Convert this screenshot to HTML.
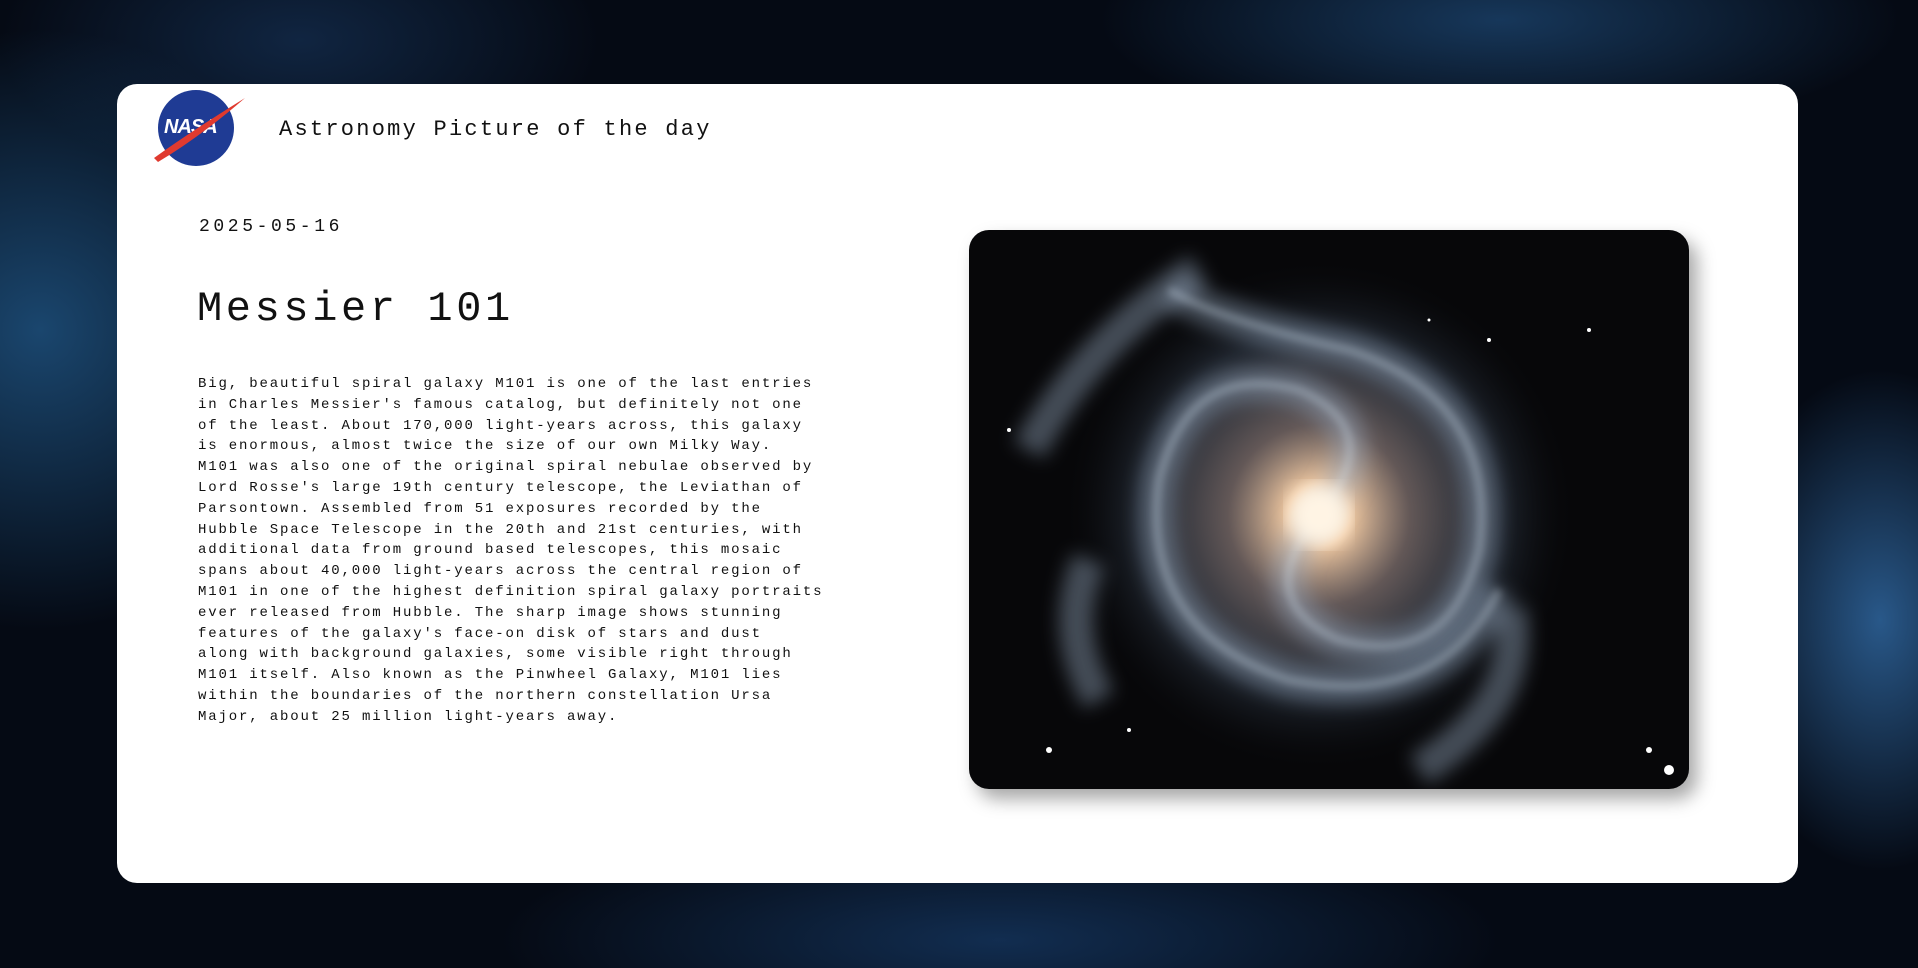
<!DOCTYPE html>
<html><head><meta charset="utf-8"><style>
html,body{margin:0;padding:0;width:1918px;height:968px;overflow:hidden}
body{background:
radial-gradient(ellipse 300px 300px at 40px 330px,rgba(40,110,170,.6),transparent),
radial-gradient(ellipse 160px 250px at 1880px 620px,rgba(60,130,200,.65),transparent),
radial-gradient(ellipse 400px 120px at 1500px 20px,rgba(40,100,160,.5),transparent),
radial-gradient(ellipse 500px 120px at 1000px 940px,rgba(30,80,140,.5),transparent),
radial-gradient(ellipse 300px 150px at 300px 40px,rgba(30,70,120,.45),transparent),
#050a14;font-family:"Liberation Mono",monospace;position:relative}
.card{position:absolute;left:117px;top:84px;width:1681px;height:799px;background:#fff;border-radius:20px}
.logo{position:absolute;left:158px;top:90px;width:76px;height:76px;border-radius:50%;background:#1f3b94}
.logo span{position:absolute;left:6px;top:26px;color:#fff;font:bold italic 20px "Liberation Sans",sans-serif;letter-spacing:-1px}
.swoosh{position:absolute;left:150px;top:92px}
.title{position:absolute;left:279px;top:117px;font-size:22px;letter-spacing:2.25px;color:#111}
.date{position:absolute;left:199px;top:217px;font-size:18px;letter-spacing:3.6px;color:#111}
h1{position:absolute;left:197px;top:285px;margin:0;font-weight:normal;font-size:42px;letter-spacing:3.6px;color:#111}
p{position:absolute;left:198px;top:374px;margin:0;font-size:14px;letter-spacing:1.85px;line-height:20.8px;color:#111;white-space:pre}
.img{position:absolute;left:969px;top:230px;width:720px;height:559px;border-radius:20px;overflow:hidden;box-shadow:8px 10px 18px rgba(0,0,0,.35);background:#070709}
</style></head><body>
<div class="card"></div>
<div class="logo"><span>NASA</span></div>
<svg class="swoosh" width="100" height="80"><path d="M4 66 Q40 40 95 6 Q50 45 8 70Z" fill="#e03a2f"/></svg>
<div class="title">Astronomy Picture of the day</div>
<div class="date">2025-05-16</div>
<h1>Messier 101</h1>
<p>Big, beautiful spiral galaxy M101 is one of the last entries
in Charles Messier's famous catalog, but definitely not one
of the least. About 170,000 light-years across, this galaxy
is enormous, almost twice the size of our own Milky Way.
M101 was also one of the original spiral nebulae observed by
Lord Rosse's large 19th century telescope, the Leviathan of
Parsontown. Assembled from 51 exposures recorded by the
Hubble Space Telescope in the 20th and 21st centuries, with
additional data from ground based telescopes, this mosaic
spans about 40,000 light-years across the central region of
M101 in one of the highest definition spiral galaxy portraits
ever released from Hubble. The sharp image shows stunning
features of the galaxy's face-on disk of stars and dust
along with background galaxies, some visible right through
M101 itself. Also known as the Pinwheel Galaxy, M101 lies
within the boundaries of the northern constellation Ursa
Major, about 25 million light-years away.</p>
<div class="img"><svg width="720" height="559" viewBox="0 0 720 559">
<defs><filter id="b"><feGaussianBlur stdDeviation="9"/></filter><filter id="c"><feGaussianBlur stdDeviation="4"/></filter>
<radialGradient id="g"><stop offset="0" stop-color="#fff4e0"/><stop offset=".12" stop-color="#f0c8a0"/><stop offset=".35" stop-color="#8a7a78" stop-opacity=".7"/><stop offset=".7" stop-color="#4a5a70" stop-opacity=".35"/><stop offset="1" stop-color="#000" stop-opacity="0"/></radialGradient></defs>
<circle cx="350" cy="285" r="260" fill="url(#g)"/>
<g fill="none" stroke="#9fb4cc" stroke-opacity=".4" filter="url(#b)" stroke-width="34">
<path d="M350 285 Q420 200 330 160 Q220 130 190 250 Q170 400 320 450 Q470 480 530 360"/>
<path d="M350 285 Q280 370 370 410 Q480 440 510 320 Q530 170 380 120 Q250 90 200 60"/>
<path d="M230 40 Q120 110 60 220"/><path d="M540 380 Q560 470 450 540"/>
<path d="M120 330 Q90 400 130 470"/>
</g>
<g fill="none" stroke="#d8e4f2" stroke-opacity=".3" filter="url(#c)" stroke-width="8">
<path d="M350 285 Q420 200 330 160 Q220 130 190 250 Q170 400 320 450 Q470 480 530 360"/>
<path d="M350 285 Q280 370 370 410 Q480 440 510 320 Q530 170 380 120 Q250 90 200 60"/>
</g>
<circle cx="350" cy="285" r="30" fill="#fff4e4" filter="url(#b)"/>
<g fill="#fff"><circle cx="80" cy="520" r="3"/><circle cx="680" cy="520" r="3"/><circle cx="700" cy="540" r="5"/><circle cx="40" cy="200" r="2"/><circle cx="620" cy="100" r="2"/><circle cx="520" cy="110" r="2"/><circle cx="460" cy="90" r="1.5"/><circle cx="160" cy="500" r="2"/></g>
</svg></div>
</body></html>
